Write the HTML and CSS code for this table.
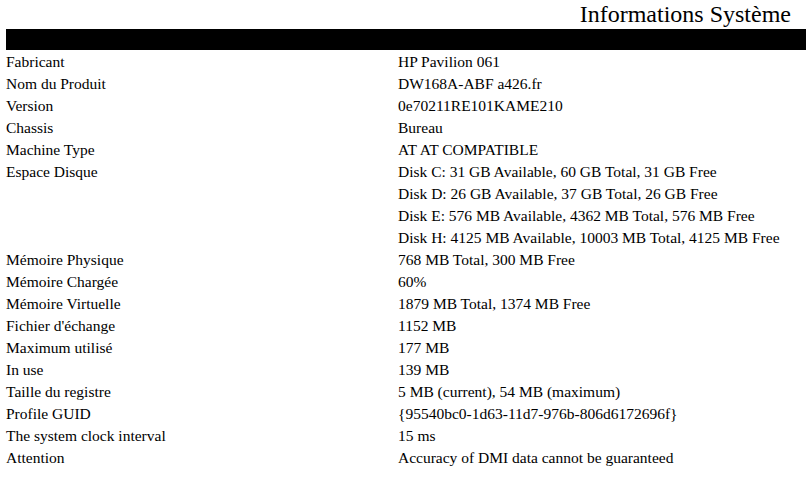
FILE: index.html
```html
<!DOCTYPE html>
<html lang="fr">
<head>
<meta charset="utf-8">
<title>Informations Système</title>
<link rel="stylesheet" href="styles.css">
</head>
<body>
<div class="page">
  <h1 class="title">Informations Système</h1>
  <div class="bar"></div>
  <div class="info">
    <div class="label">Fabricant</div><div class="value">HP Pavilion 061</div>
    <div class="label">Nom du Produit</div><div class="value">DW168A-ABF a426.fr</div>
    <div class="label">Version</div><div class="value">0e70211RE101KAME210</div>
    <div class="label">Chassis</div><div class="value">Bureau</div>
    <div class="label">Machine Type</div><div class="value">AT AT COMPATIBLE</div>
    <div class="label">Espace Disque</div>
    <div class="value">
      <div>Disk C: 31 GB Available, 60 GB Total, 31 GB Free</div>
      <div>Disk D: 26 GB Available, 37 GB Total, 26 GB Free</div>
      <div>Disk E: 576 MB Available, 4362 MB Total, 576 MB Free</div>
      <div>Disk H: 4125 MB Available, 10003 MB Total, 4125 MB Free</div>
    </div>
    <div class="label">Mémoire Physique</div><div class="value">768 MB Total, 300 MB Free</div>
    <div class="label">Mémoire Chargée</div><div class="value">60%</div>
    <div class="label">Mémoire Virtuelle</div><div class="value">1879 MB Total, 1374 MB Free</div>
    <div class="label">Fichier d'échange</div><div class="value">1152 MB</div>
    <div class="label">Maximum utilisé</div><div class="value">177 MB</div>
    <div class="label">In use</div><div class="value">139 MB</div>
    <div class="label">Taille du registre</div><div class="value">5 MB (current), 54 MB (maximum)</div>
    <div class="label">Profile GUID</div><div class="value">{95540bc0-1d63-11d7-976b-806d6172696f}</div>
    <div class="label">The system clock interval</div><div class="value">15 ms</div>
    <div class="label">Attention</div><div class="value">Accuracy of DMI data cannot be guaranteed</div>
  </div>
</div>
</body>
</html>
```

FILE: styles.css
```css
html, body {
  margin: 0;
  padding: 0;
  background: #ffffff;
}
body {
  font-family: "Liberation Serif", "Times New Roman", serif;
  color: #000000;
}
.page {
  padding-left: 6px;
}
.title {
  margin: 0;
  height: 29px;
  font-size: 24px;
  font-weight: normal;
  line-height: 29px;
  text-align: right;
  padding-right: 15px;
}
.bar {
  height: 21px;
  background: #000000;
  margin-bottom: 1px;
}
.info {
  display: grid;
  grid-template-columns: 392px 1fr;
  font-size: 15.5px;
  line-height: 22px;
}
```
